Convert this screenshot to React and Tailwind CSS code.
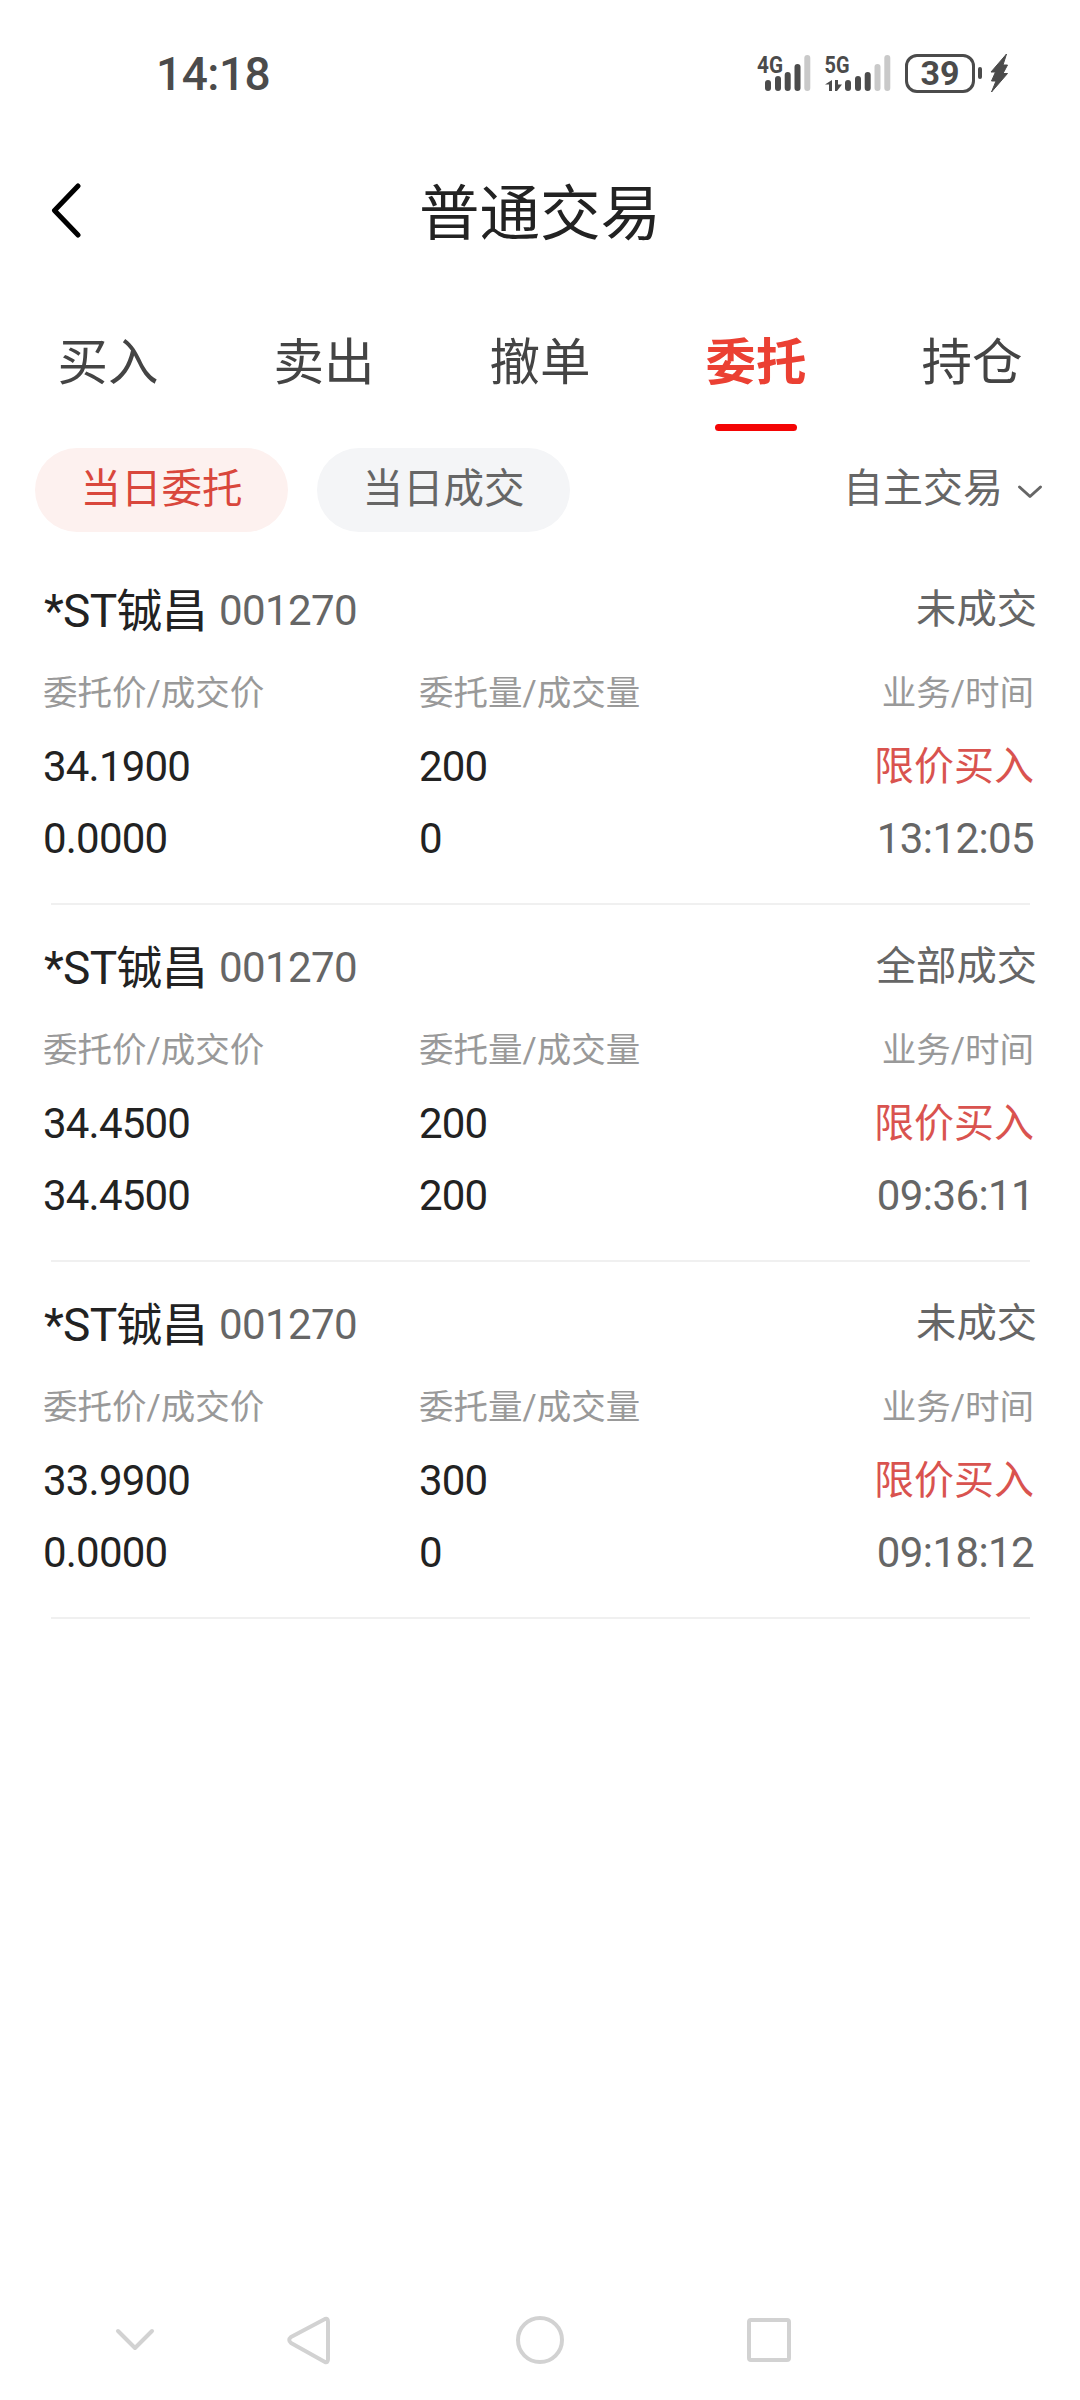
const TABS = ["买入", "卖出", "撤单", "委托", "持仓"];

const ORDERS = [
  { status: "未成交", price: "34.1900", dealPrice: "0.0000", qty: "200", dealQty: "0", time: "13:12:05" },
  { status: "全部成交", price: "34.4500", dealPrice: "34.4500", qty: "200", dealQty: "200", time: "09:36:11" },
  { status: "未成交", price: "33.9900", dealPrice: "0.0000", qty: "300", dealQty: "0", time: "09:18:12" },
];

function Signals() {
  return (
    <svg width="138" height="60" viewBox="-4 -12 138 60" fill="#4b4b4b" className="font-bold">
      <text x="0" y="18" fontSize="24.500" textLength="26" lengthAdjust="spacingAndGlyphs">4G</text>
      <rect x="8" y="25" width="6" height="11" rx="3" />
      <rect x="18" y="21" width="6" height="15" rx="3" />
      <rect x="27.7" y="17" width="6" height="19" rx="3" />
      <rect x="37.5" y="9" width="6" height="27" rx="3" />
      <rect x="47.3" y="0" width="6" height="36" rx="3" fill="#c9c9c9" />
      <text x="67.500" y="18" fontSize="24.500" textLength="25" lengthAdjust="spacingAndGlyphs">5G</text>
      <path d="M75 25v11h-3v-6.500h-4zM78 25v11h2l5-6.500h-4v-4.500z" />
      <rect x="88" y="25" width="6" height="11" rx="3" />
      <rect x="98" y="21" width="6" height="15" rx="3" />
      <rect x="107.7" y="17" width="6" height="19" rx="3" />
      <rect x="117.5" y="9" width="6" height="27" rx="3" fill="#c9c9c9" />
      <rect x="127.3" y="0" width="6" height="36" rx="3" fill="#c9c9c9" />
    </svg>
  );
}

function StatusBar() {
  return (
    <div className="flex h-[146px] items-center justify-between pr-[72px] pl-[156px] text-[#4b4b4b]">
      <span className="pt-[2px] text-[46px] leading-none font-medium tracking-[-0.500px]">14:18</span>
      <div className="flex h-[60px] items-center">
        <Signals />
        <div className="ml-[14px] flex h-[39px] w-[70px] items-center justify-center rounded-[12px] border-[3px] border-[#4b4b4b]">
          <span className="text-[34px] leading-none font-bold">39</span>
        </div>
        <div className="ml-[3px] h-3 w-1 rounded-full bg-[#4b4b4b]" />
        <svg width="18" height="40" viewBox="0 0 18 40" fill="#4b4b4b" stroke="#4b4b4b" strokeWidth="1" strokeLinejoin="round" className="ml-[8px]">
          <path d="M16.500 1 1 19h4.500L1.500 28h4.500L1.500 39 17.500 20.500h-4.500L17.500 12h-4.500z" />
        </svg>
      </div>
    </div>
  );
}

function Header() {
  return (
    <header className="flex h-[130px] items-center justify-between px-[49px]">
      <svg width="34" height="56" viewBox="0 0 34 56" fill="none" stroke="#000" strokeWidth="5" strokeLinecap="round" strokeLinejoin="round">
        <path d="M29 3 5.500 27.500 29 52" />
      </svg>
      <h1 className="pt-[8px] text-[60.500px] leading-none text-[#222]">普通交易</h1>
      <span className="w-[34px]" />
    </header>
  );
}

function Tabs() {
  return (
    <nav className="grid h-[155px] grid-cols-5">
      {TABS.map((t) => (
        <div key={t} className="flex flex-col items-center pt-[62px]">
          <span className={t === "委托" ? "text-[50.500px] leading-[50px] font-bold text-[#eb4033]" : "text-[50.500px] leading-[50px] text-[#444]"}>{t}</span>
          {t === "委托" && <span className="mt-[36px] h-[7px] w-[82px] rounded-full bg-[#f40505]" />}
        </div>
      ))}
    </nav>
  );
}

function Filters() {
  return (
    <div className="mt-[17px] flex h-[84px] items-center pr-[36px] pl-[35px] text-[40.500px] leading-none">
      <button className="h-[84px] w-[253px] rounded-full bg-[#fdf1ef] pb-[2px] text-[#d9473c]">当日委托</button>
      <button className="ml-[29px] h-[84px] w-[253px] rounded-full bg-[#f4f5f7] pb-[2px] text-[#666]">当日成交</button>
      <button className="ml-auto flex h-full items-center text-[#666]">
        <span className="pb-[2px] text-[40px]">自主交易</span>
        <svg width="28" height="16" viewBox="0 0 28 16" fill="none" stroke="#666" strokeWidth="3" strokeLinecap="round" strokeLinejoin="round" className="mt-[16px] mb-[13px] ml-[13px]">
          <path d="M3.500 3 14 12.500 24.500 3" />
        </svg>
      </button>
    </div>
  );
}

function Order({ o }) {
  return (
    <section className="h-[357px] pt-[21px]">
      <div className="flex h-[86px] items-center pr-[43px] pb-[3px] pl-[44px]">
        <span className="text-[46px] leading-none tracking-[-0.700px] text-[#222]">*ST铖昌</span>
        <span className="ml-[12px] text-[42px] leading-none tracking-[-0.600px] text-[#666]">001270</span>
        <span className="ml-auto text-[40.300px] leading-none text-[#666]">{o.status}</span>
      </div>
      <div className="grid grid-cols-[376px_300px_1fr] pr-[46px] pl-[43px] text-[42px] tracking-[-0.800px] text-[#222]">
        <span className="h-[76px] text-[34.500px] leading-[77px] tracking-normal text-[#999]">委托价/成交价</span>
        <span className="h-[76px] text-[34.500px] leading-[77px] tracking-normal text-[#999]">委托量/成交量</span>
        <span className="h-[76px] text-right text-[34.500px] leading-[77px] tracking-normal text-[#999]">业务/时间</span>
        <span className="h-[72px] leading-[72px]">{o.price}</span>
        <span className="h-[72px] leading-[72px]">{o.qty}</span>
        <span className="h-[72px] text-right text-[40px] leading-[72px] tracking-normal text-[#d9534f]">限价买入</span>
        <span className="h-[72px] leading-[72px]">{o.dealPrice}</span>
        <span className="h-[72px] leading-[72px]">{o.dealQty}</span>
        <span className="h-[72px] text-right leading-[72px] tracking-[-0.600px] text-[#666]">{o.time}</span>
      </div>
      <div className="mt-[28px] mr-[50px] ml-[51px] h-[2px] bg-[#f0f0f0]" />
    </section>
  );
}

function NavBar() {
  return (
    <svg width="1080" height="120" viewBox="0 0 1080 120" fill="none" stroke="#d2d2d2" strokeWidth="4" strokeLinecap="round" strokeLinejoin="round" className="mt-auto">
      <path d="M118 51 135 68 152 51" />
      <path d="M325 39 291 57Q287.500 60 291 63L325 82Q328 83 328 79V42Q328 38 325 39Z" />
      <circle cx="540" cy="60" r="22" />
      <rect x="749" y="40" width="40" height="40" rx="2" />
    </svg>
  );
}

export default function App() {
  return (
    <div className="flex h-[2400px] w-[1080px] flex-col overflow-hidden bg-white font-[Roboto,'Noto_Sans_CJK_SC',sans-serif]">
      <StatusBar />
      <Header />
      <Tabs />
      <Filters />
      <main className="mt-4">
        {ORDERS.map((o) => (
          <Order key={o.time} o={o} />
        ))}
      </main>
      <NavBar />
    </div>
  );
}
